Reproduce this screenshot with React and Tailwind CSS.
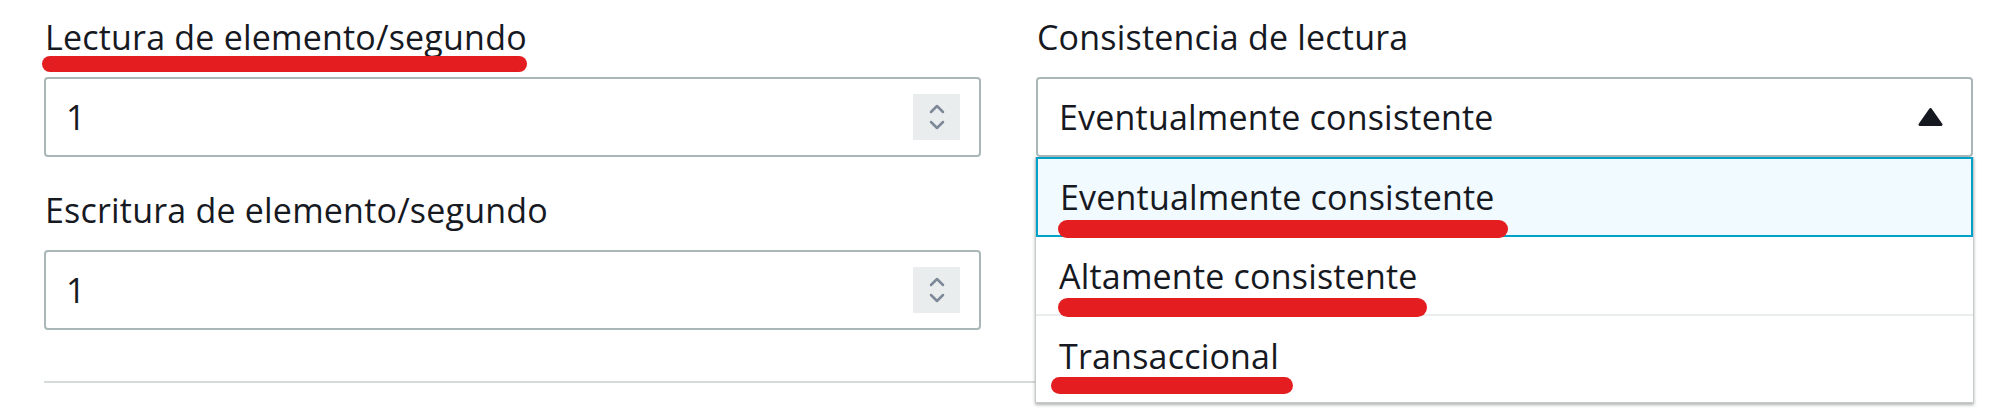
import { useState } from 'react';

const Mark = ({ className }) => (
    <span className={`absolute rounded-full bg-[#e41e20] ${className}`} />
);

const Spinner = () => (
    <div className="w-[47px] h-[46px] bg-[#eaeded] flex flex-col items-center justify-center gap-[6px]">
        <svg width="16" height="10" viewBox="0 0 16 10" fill="none">
            <path d="M2 8 L8 2 L14 8" stroke="#7d8998" strokeWidth="2.5" strokeLinecap="round" strokeLinejoin="round" />
        </svg>
        <svg width="16" height="10" viewBox="0 0 16 10" fill="none">
            <path d="M2 2 L8 8 L14 2" stroke="#7d8998" strokeWidth="2.5" strokeLinecap="round" strokeLinejoin="round" />
        </svg>
    </div>
);

const NumberField = ({ label, value, marked }) => (
    <div>
        <div className="relative h-[40px]">
            <span className="pl-[1px]">{label}</span>
            {marked && <Mark className="left-[-2px] top-[39px] w-[485px] h-[16px]" />}
        </div>
        <div className="mt-[20px] h-[80px] border-2 border-[#aab7b8] rounded-[4px] flex items-center justify-between pl-[20px] pr-[19px]">
            <span>{value}</span>
            <Spinner />
        </div>
    </div>
);

const options = [
    { label: 'Eventualmente consistente', mark: 'left-[20px] top-[61px] w-[450px] h-[18px]' },
    { label: 'Altamente consistente', mark: 'left-[22px] top-[61px] w-[369px] h-[19px]' },
    { label: 'Transaccional', mark: 'left-[15px] top-[61px] w-[242px] h-[17px]' },
];

const App = () => {
    const [selected] = useState(0);

    return (
        <div className="w-[2000px] h-[419px] overflow-hidden bg-white text-[#16191f] text-[34px] leading-[40px] tracking-[0.2px] font-['Open_Sans',sans-serif]">
            <div className="pl-[44px] pr-[27px] pt-[17px]">
                <div className="grid grid-cols-2 gap-x-[55px]">
                    {/* Left column */}
                    <div>
                        <NumberField label="Lectura de elemento/segundo" value="1" marked />
                        <div className="mt-[33px]">
                            <NumberField label="Escritura de elemento/segundo" value="1" />
                        </div>
                    </div>

                    {/* Right column */}
                    <div>
                        <div className="h-[40px] pl-[1px]">Consistencia de lectura</div>
                        <div className="relative mt-[20px]">
                            <div className="h-[80px] border-2 border-[#aab7b8] rounded-[4px] flex items-center justify-between pl-[21px] pr-[28px]">
                                <span>{options[selected].label}</span>
                                <svg width="25" height="20" viewBox="0 0 25 20">
                                    <polygon points="12.5,2.5 23,17.5 2,17.5" fill="#16191f" stroke="#16191f" strokeWidth="3" strokeLinejoin="round" />
                                </svg>
                            </div>

                            {/* Dropdown */}
                            <div className="absolute top-full left-[-1px] right-[-1px] z-10 bg-white border border-t-0 border-[#c6cccc] pb-[6px] shadow-[0_2px_3px_rgba(0,0,0,0.3)]">
                                {options.map((o, i) => (
                                    <div
                                        key={o.label}
                                        className={
                                            i === selected
                                                ? 'relative h-[80px] flex items-center pl-[22px] border-2 border-[#00a1c9] bg-[#f1faff]'
                                                : i === 1
                                                    ? 'relative h-[79px] flex items-center pl-[23px] border-b-2 border-[#eaeded]'
                                                    : 'relative h-[80px] flex items-center pl-[23px]'
                                        }
                                    >
                                        <span>{o.label}</span>
                                        <Mark className={o.mark} />
                                    </div>
                                ))}
                            </div>
                        </div>
                    </div>
                </div>

                <div className="mt-[51px] h-[2px] bg-[#d5dbdb]" />
            </div>
        </div>
    );
};

export default App;
